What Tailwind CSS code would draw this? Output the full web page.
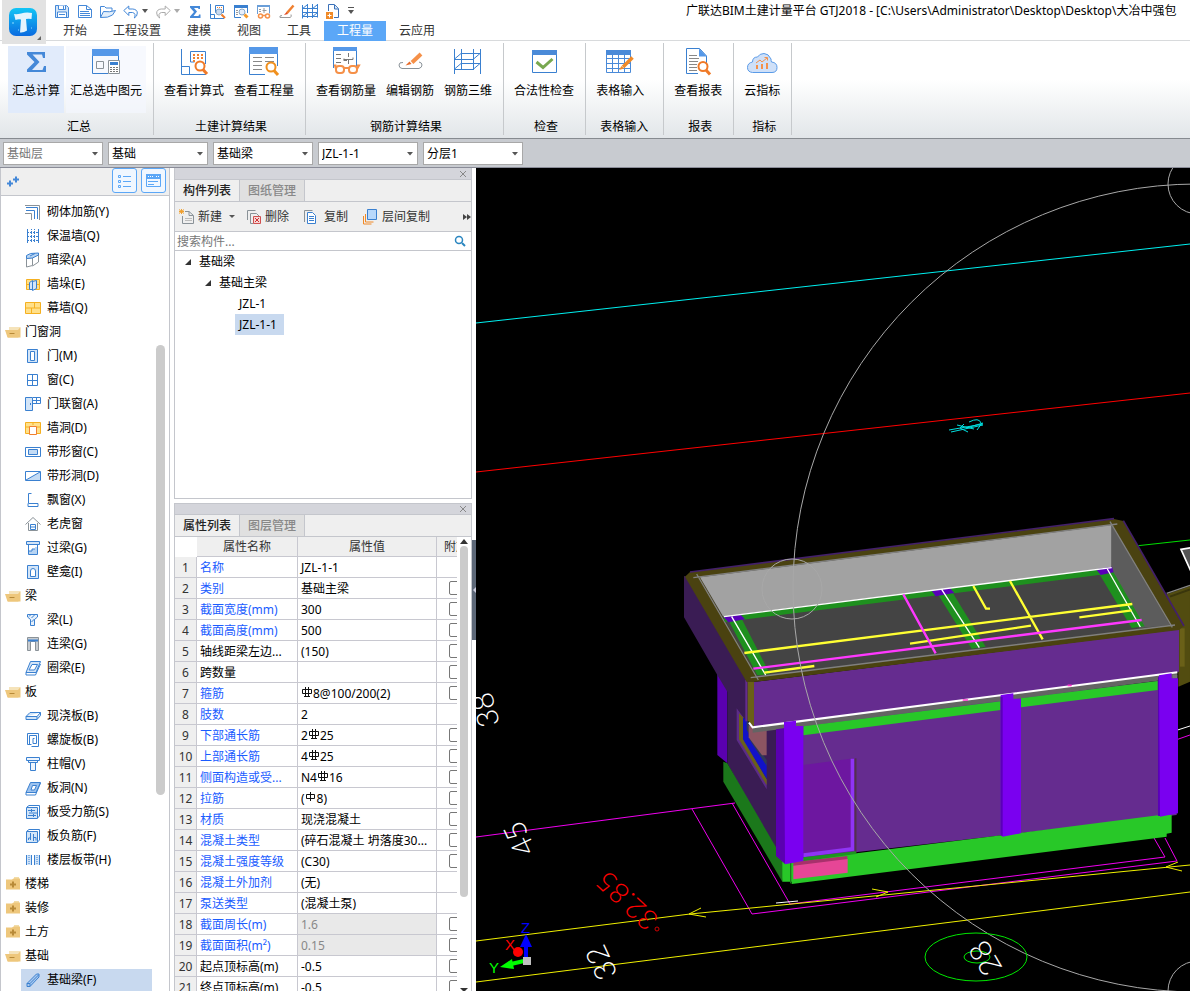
<!DOCTYPE html>
<html lang="zh-CN">
<head>
    <meta charset="UTF-8">
    <meta name="viewport" content="width=device-width, initial-scale=1.0">
    <script src="https://cdn.jsdelivr.net/npm/@tailwindcss/browser@4"></script>
    <title>广联达BIM土建计量平台 GTJ2018</title>
</head>
<body class="h-screen flex flex-col overflow-hidden bg-white text-black text-xs font-['Noto_Sans','Noto_Sans_CJK_SC',sans-serif]">
    <!-- titulo y pestañas -->
    <header class="relative shrink-0">
        <button aria-label="菜单" class="absolute left-[2px] top-0 z-10 w-[44px] h-[44px] bg-[#e2e2e2]">
            <svg class="size-full" viewBox="0 0 44 44">
                <defs>
                    <linearGradient id="logo" x1="0" y1="0" x2="0" y2="1"><stop offset="0" stop-color="#12c5f5"/><stop offset="1" stop-color="#0b6be0"/></linearGradient>
                </defs>
                <rect x="7" y="8" width="28" height="28" rx="7" fill="url(#logo)"/>
                <path d="M12 14q3 .5 7-.5 5-1.500 11-.5l-.5 6q-3-.5-5.500 0l1 11.500q-3.500 2.500-7 2l1-13q-3-.5-5.500.5z" fill="#e4f4fd"/>
                <path d="M10 23h2m17 5h1m-14 2h1" stroke="#8fdcff"/>
                <path d="M39 36v4h-4z" fill="#666"/>
            </svg>
        </button>
        <div class="flex items-center h-[21px] pl-[54px] gap-[7px]">
            <!-- acceso rapido -->
            <button aria-label="保存"><svg class="size-4" viewBox="0 0 16 16" fill="none" stroke="#4488d8"><path d="M1.500 2.500h11l2 2v10h-13z" fill="#d5e6f8"/><path d="M4.500 2.500v4h7v-4M9.500 3v3M3.500 14v-5h9v5M5 11.500h6" fill="#fff"/></svg></button>
            <button aria-label="新建"><svg class="size-4" viewBox="0 0 16 16" fill="none" stroke="#4488d8"><path d="M1.500 2.500h8l5 4v8h-13z"/><path d="M9.500 2.500v4h5M3 8.500h9M3 10.500h10M3 12.500h10"/></svg></button>
            <button aria-label="打开"><svg class="size-4" viewBox="0 0 16 16" fill="none" stroke="#4488d8"><path d="M.5 14.500v-11h4l1.500 1.500h6v3"/><path d="M.5 14.500l3-6q6 1 12-1l-3 4.500q-4 3-12 2.500z" fill="#e3effb"/></svg></button>
            <span class="flex items-center gap-[3px]">
                <button aria-label="撤销"><svg class="size-4" viewBox="0 0 16 16" fill="none" stroke="#4488d8"><path d="M.8 7.500l5-4.500v3h4q4.500.5 4.500 4t-3 5q1-2 .7-3.500t-2.500-2h-3.700v3z"/></svg></button>
                <svg class="w-[6px] h-[4px]" viewBox="0 0 6 4"><path d="M0 0h6L3 4z" fill="#555"/></svg>
            </span>
            <span class="flex items-center gap-[3px]">
                <button aria-label="恢复"><svg class="size-4" viewBox="0 0 16 16" fill="none" stroke="#aaa"><path d="M15.200 7.500l-5-4.500v3h-4q-4.500.5-4.500 4t3 5q-1-2-.7-3.500t2.500-2h3.700v3z"/></svg></button>
                <svg class="w-[6px] h-[4px]" viewBox="0 0 6 4"><path d="M0 0h6L3 4z" fill="#aaa"/></svg>
            </span>
            <button aria-label="汇总计算"><svg class="size-4" viewBox="0 0 16 16"><path d="M3 3h10v3h-1.500l-.5-1H7l3 3.500L6.500 13H11.500l.5-1.500h1.500V15H3v-1.500L7 9 3 4.500z" fill="#4488d8"/></svg></button>
            <button aria-label="查看计算式"><svg class="size-4" viewBox="0 0 16 16" fill="none" stroke="#3a80d0"><path d="M.5 1v14.500H14M.5 11.500h4v4M5.500 2.500h8v7h-8z"/><path d="M7 4.500h5M7 6.500h5" stroke="#f08030" stroke-dasharray="1 1"/><circle cx="9" cy="9" r="3" fill="#c9daf0" stroke="#88a8c8"/><path d="M11.500 11.500l3.500 3.500" stroke="#f07a28" stroke-width="2"/></svg></button>
            <button aria-label="查看工程量"><svg class="size-4" viewBox="0 0 16 16" fill="none" stroke="#3a80d0"><path d="M8 14.500H1.500v-12h13V10"/><path d="M1 3.500h14" stroke-width="3"/><path d="M3 7.500h2M3 9.500h2M3 11.500h2" stroke="#999"/><circle cx="9" cy="9" r="3" fill="#e6eefa" stroke="#88a8c8"/><path d="M11.500 11.500l3 3" stroke="#f59a28" stroke-width="3"/></svg></button>
            <button aria-label="查看钢筋量"><svg class="size-4" viewBox="0 0 16 16" fill="none" stroke="#6a9ed8"><path d="M1.500 11v-8.500h12v8"/><path d="M1 3h13" stroke-width="2"/><path d="M3 6.500h2M3 8.500h2M8 5v5M6.500 7.500h4" stroke="#999"/><g stroke="#f59048" stroke-width="1.500"><circle cx="4.500" cy="13" r="2"/><circle cx="11.500" cy="13" r="2"/><path d="M6.500 12.500h3"/></g></svg></button>
            <button aria-label="编辑钢筋"><svg class="size-4" viewBox="0 0 16 16" fill="none"><path d="M14.500 2.500L8 10" stroke="#f08030" stroke-width="2.500"/><path d="M7.500 9l-2.500 3 4-1z" fill="#e04820"/><path d="M3 12.500q-3 0-2 2h10q2-.5 1-3" stroke="#999"/></svg></button>
            <button aria-label="钢筋三维"><svg class="size-4" viewBox="0 0 16 16" fill="none" stroke="#3a80d0"><path d="M.5 2v13.500M5.500 1v14M10.500 1v14M15.500 1v13.500M0 5.500h16M0 9.500h16M0 13.500h16M0 6l5-4M0 14l5-4M10 6l5-4M10 14l5-4"/></svg></button>
            <button aria-label="导入"><svg class="size-4" viewBox="0 0 16 16" fill="none" stroke="#3a70b8"><path d="M3.500 8v-6.500h6l4 4v9H9"/><path d="M9.500 2v4h4" fill="#d5e6f8"/><rect x="1" y="9" width="7" height="7" fill="#f08a28" stroke="none"/><path d="M4.500 10.500v4M2.500 12.500h4" stroke="#fff"/></svg></button>
            <button aria-label="自定义"><svg class="w-[6px] h-[8px]" viewBox="0 0 6 8"><path d="M0 .5h6" stroke="#555"/><path d="M0 3h6L3 7z" fill="#555"/></svg></button>
            <p class="flex-1 min-w-0 ml-[325px] overflow-hidden whitespace-nowrap leading-5">广联达BIM土建计量平台 GTJ2018 - [C:\Users\Administrator\Desktop\Desktop\大冶中强包</p>
        </div>
        <nav class="flex h-[20px] pl-[50px] leading-5 text-[#333] border-b border-[#d8dadc]">
            <a href="#" class="px-[13px]">开始</a>
            <a href="#" class="px-[13px]">工程设置</a>
            <a href="#" class="px-[13px]">建模</a>
            <a href="#" class="px-[13px]">视图</a>
            <a href="#" class="px-[13px]">工具</a>
            <a href="#" class="px-[13px] h-[20px] bg-[#5ba7f7] text-white">工程量</a>
            <a href="#" class="px-[13px]">云应用</a>
        </nav>
    </header>

    <!-- cinta -->
    <section class="shrink-0 flex h-[98px] pl-1 pt-[2px] pb-[3px] bg-linear-to-b from-white from-40% to-[#e2e6e9] border-b border-[#868b90]">
        <div class="flex flex-col pl-1 pr-[7px] border-r border-[#c6c9cc]">
            <div class="flex gap-[2px] pt-[3px]">
                <button class="h-[67px] px-1 flex flex-col items-center bg-[#e1ebfb]">
                    <svg class="size-8" viewBox="0 0 32 32"><path d="M7 6h18v6h-2l-1-3.500H12.500l7 7.500-7.500 8h10.500l1.500-4h2V26H7v-2.500l7.500-7.500L7 8.500z" fill="#4488d8"/></svg>
                    <span class="leading-[26px]">汇总计算</span>
                </button>
                <button class="h-[67px] px-1 flex flex-col items-center bg-[#f3f7fe]/70">
                    <svg class="size-8" viewBox="0 0 32 32" fill="none"><path d="M18 27.500H2.500V4.500h26V14" stroke="#3a80d0"/><path d="M2 3h27v7H2z" fill="#5598e8"/><path d="M6.500 15.500h7v7h-7z" stroke="#8a9298"/><path d="M18.500 14.500h11v13h-11z" fill="#fff" stroke="#8a9298"/><path d="M20 17.500h8" stroke="#3a80d0" stroke-width="3"/><path d="M20 21.500h9M20 23.500h9M20 25.500h9" stroke="#777" stroke-dasharray="2 1"/></svg>
                    <span class="leading-[26px]">汇总选中图元</span>
                </button>
            </div>
            <span class="mt-auto pl-1 text-center leading-4">汇总</span>
        </div>
        <div class="flex flex-col pl-1.5 pr-[7px] border-r border-[#c6c9cc]">
            <div class="flex gap-[2px] pt-[3px]">
                <button class="h-[67px] px-1 flex flex-col items-center">
                    <svg class="size-8" viewBox="0 0 32 32" fill="none" stroke="#3a80d0"><path d="M3.500 3v25.500H28M3.500 20.500h8v8M12.500 16V5.500h15V18M12.500 16h4"/><path d="M15 9h11M15 12h11M15 15h4" stroke="#f08030" stroke-width="2" stroke-dasharray="2 2"/><circle cx="22" cy="20" r="4.500" fill="#fff" stroke="#f07a28" stroke-width="2"/><path d="M25 23.500l4 4.500" stroke="#f07a28" stroke-width="3"/></svg>
                    <span class="leading-[26px]">查看计算式</span>
                </button>
                <button class="h-[67px] px-1 flex flex-col items-center">
                    <svg class="size-8" viewBox="0 0 32 32" fill="none"><path d="M17 28.500H1.500V4.500h28V20" stroke="#3a80d0"/><path d="M1 1h29v7H1z" fill="#5598e8"/><path d="M5 11.500h9M5 15.500h9M5 19.500h9M5 23.500h9M17 11.500h9M17 15.500h9" stroke="#888"/><circle cx="23" cy="21" r="4.500" fill="#fff" stroke="#f0901e" stroke-width="2"/><path d="M26 24.500l4 4.500" stroke="#f0901e" stroke-width="3"/></svg>
                    <span class="leading-[26px]">查看工程量</span>
                </button>
            </div>
            <span class="mt-auto pl-1 text-center leading-4">土建计算结果</span>
        </div>
        <div class="flex flex-col pl-1.5 pr-[7px] border-r border-[#c6c9cc]">
            <div class="flex gap-[2px] pt-[3px]">
                <button class="h-[67px] px-1 flex flex-col items-center">
                    <svg class="size-8" viewBox="0 0 32 32" fill="none"><path d="M3.500 22V3.500h23V20" stroke="#3a80d0"/><path d="M3 1h24v4H3z" fill="#5598e8"/><path d="M6 8.500h5M6 12.500h5M6 16.500h5M18.500 7v4M18.500 14v4M14 14.500v-1h9v-2M14 12.500v2h3" stroke="#777"/><g stroke="#f59048" stroke-width="2"><rect x="6" y="20" width="8" height="7" rx="3"/><rect x="19" y="20" width="8" height="7" rx="3"/><path d="M14 22h5M6 23l-1-3.500h1.500M27 23l2-3.500h-2"/></g></svg>
                    <span class="leading-[26px]">查看钢筋量</span>
                </button>
                <button class="h-[67px] px-1 flex flex-col items-center">
                    <svg class="size-8" viewBox="0 0 32 32" fill="none"><path d="M27 8l-9 8.500" stroke="#f59048" stroke-width="4"/><path d="M15.500 15.500l-4 4 6-1.500z" fill="#e86a28"/><path d="M9 16.500q-4-.5-4 2.500t3 3.500h17q3-1 3-3.500t-3-3" stroke="#8a9298"/></svg>
                    <span class="leading-[26px]">编辑钢筋</span>
                </button>
                <button class="h-[67px] px-1 flex flex-col items-center">
                    <svg class="size-8" viewBox="0 0 32 32" fill="none" stroke="#3a80d0"><path d="M2.500 3v25M9.500 3v20M21.500 3v20M28.500 3v25M9 7.500h19.500M2 13.500h20M9 17.500h19.500M2 23.500h20M2 13.500l7-6M2 23.500l7-6M21 13.500l7-6M21 23.500l7-6"/></svg>
                    <span class="leading-[26px]">钢筋三维</span>
                </button>
            </div>
            <span class="mt-auto pl-1 text-center leading-4">钢筋计算结果</span>
        </div>
        <div class="flex flex-col pl-1.5 pr-[7px] border-r border-[#c6c9cc]">
            <button class="h-[67px] mt-[3px] px-1 flex flex-col items-center">
                <svg class="size-8" viewBox="0 0 32 32" fill="none"><path d="M4.500 5v21.500h24V5" fill="#fff" stroke="#3a80d0"/><path d="M4 4h25v5H4z" fill="#4a8ad8"/><path d="M8.500 16l6.500 5.500 9.500-8.500" stroke="#78a850" stroke-width="3"/></svg>
                <span class="leading-[26px]">合法性检查</span>
            </button>
            <span class="mt-auto pl-1 text-center leading-4">检查</span>
        </div>
        <div class="flex flex-col pl-1.5 pr-[15px] border-r border-[#c6c9cc]">
            <button class="h-[67px] mt-[3px] px-1 flex flex-col items-center">
                <svg class="size-8" viewBox="0 0 32 32" fill="none"><path d="M2.500 8v18.500h24V8M2 12.500h24M2 17.500h24M2 22.500h24M8.500 8v18M14.500 8v18M20.500 8v18" stroke="#4a8ad8"/><path d="M2 4h25v5H2z" fill="#4a8ad8"/><path d="M28.500 11.500L19 21" stroke="#f08a28" stroke-width="3.500"/><path d="M17.500 20l-2.500 4 5-1.500z" fill="#f08a28"/></svg>
                <span class="leading-[26px]">表格输入</span>
            </button>
            <span class="mt-auto pl-2 text-center leading-4">表格输入</span>
        </div>
        <div class="flex flex-col pl-1.5 pr-[7px] border-r border-[#c6c9cc]">
            <button class="h-[67px] mt-[3px] px-1 flex flex-col items-center">
                <svg class="size-8" viewBox="0 0 32 32" fill="none"><path d="M16 27.500H4.500v-25h13l7 7.500v7" fill="#fff" stroke="#3a80d0"/><path d="M17 2.500l8 8h-8z" fill="#5598e8"/><path d="M7 9.500h8M7 12.500h10M7 15.500h9M7 18.500h8M7 21.500h8M7 24.500h8" stroke="#888"/><circle cx="21" cy="20.500" r="4.500" fill="#fff" stroke="#f07a28" stroke-width="2"/><path d="M24 24l4 4.500" stroke="#f07a28" stroke-width="3"/></svg>
                <span class="leading-[26px]">查看报表</span>
            </button>
            <span class="mt-auto pl-1 text-center leading-4">报表</span>
        </div>
        <div class="flex flex-col pl-1.5 pr-[7px] border-r border-[#c6c9cc]">
            <button class="h-[67px] mt-[3px] px-1 flex flex-col items-center">
                <svg class="size-8" viewBox="0 0 32 32" fill="none"><path d="M6.500 26.500q-5-.5-5-5t5-5.500q0-5 5-5 2-3.500 6.500-3.500t7 5.500q0 2 .5 3 5.500.5 5.500 5.500t-5 5z" fill="#cfe0f8" stroke="#5a9be8"/><path d="M11 23v-4M16 23v-5M21 23v-6" stroke="#f59048" stroke-width="2"/><path d="M10 17l4-3 2 2 5-4M18.500 11.500h3v3" stroke="#f59048"/></svg>
                <span class="leading-[26px]">云指标</span>
            </button>
            <span class="mt-auto pl-1 text-center leading-4">指标</span>
        </div>
    </section>

    <!-- selectores -->
    <section id="filters" class="shrink-0 flex gap-[5px] h-[29px] pl-[3px] pt-[3px] bg-[#c8cbd0] border-b border-[#8a8c98]"></section>

    <main class="flex-1 min-h-0 flex">
        <!-- navegacion -->
        <aside class="relative shrink-0 w-[170px] flex flex-col border-x border-[#c4c6cc]">
            <div class="flex items-center gap-1 shrink-0 h-[28px] pl-[6px] pr-[3px] bg-[#efefef] border-b border-[#c4c6cc]">
                <svg class="w-3 h-3 mr-auto" viewBox="0 0 12 12"><path d="M0 7.500h6M3 4.500v6M6 3.500h6M9 .5v6" stroke="#4488d8" stroke-width="2"/></svg>
                <button aria-label="列表" class="size-[25px] -mt-[2px] rounded-[3px] border border-[#5ba7f7] bg-[#f0f7ff] flex items-center justify-center"><svg class="size-4" viewBox="0 0 16 16" fill="none" stroke="#5ba7f7"><path d="M1.500 2.500h2v2h-2zM1.500 7.500h2v2h-2zM1.500 12.500h2v2h-2zM6 3.500h8M6 8.500h8M6 13.500h8"/></svg></button>
                <button aria-label="面板" class="size-[25px] -mt-[2px] rounded-[3px] border border-[#5ba7f7] bg-[#f0f7ff] flex items-center justify-center"><svg class="size-4" viewBox="0 0 16 16" fill="none" stroke="#5ba7f7"><path d="M.5 1.500h14v12H.5z"/><path d="M0 3.500h15" stroke-width="5"/><path d="M2 3.500h5M10 3.500h3" stroke="#fff" stroke-dasharray="1 1"/><path d="M2 8.500h10M2 11.500h6"/></svg></button>
            </div>
            <ul id="nav-tree" class="flex-1 min-h-0 overflow-hidden pt-1"></ul>
            <div class="absolute right-[4px] top-[177px] w-[9px] h-[450px] rounded-full bg-[#cbcbcb]"></div>
        </aside>

        <div class="shrink-0 w-[302px] pl-1 pr-0 flex flex-col">
            <!-- lista de componentes -->
            <section class="shrink-0 h-[331px] flex flex-col border-x border-b border-[#c4c6cc]">
                <div class="flex justify-end items-center h-[12px] pr-1 bg-[#d4d5db] border-b border-[#c4c6cc]"><button aria-label="关闭"><svg class="size-2" viewBox="0 0 8 8"><path d="M1 1l6 6M7 1l-6 6" stroke="#888"/></svg></button></div>
                <div class="flex h-[22px] leading-[21px] bg-[#efefef] border-b border-[#c4c6cc]">
                    <button class="w-[65px] font-medium text-[#222] border-r border-[#c4c6cc]">构件列表</button>
                    <button class="w-[65px] font-medium text-[#888] bg-[#e0e0e0] border-r border-[#c4c6cc]">图纸管理</button>
                </div>
                <div class="flex items-center h-[30px] pl-1 bg-[#efefef] border-b border-[#c4c6cc] text-[#333]">
                    <button class="flex items-center gap-[3px]"><svg class="size-4" viewBox="0 0 16 16" fill="none"><path d="M6 2.500h4l4.500 4v8h-11V7" stroke="#8a9298"/><path d="M10 2.500v4h4" stroke="#8a9298"/><path d="M6 9.500h7M6 11.500h7" stroke="#bbb"/><path d="M0 .5l5 4M5 .5l-5 4M0 2.500h5M2.500 0v5" stroke="#f0a030"/></svg>新建</button>
                    <svg class="ml-[7px] w-[6px] h-[4px]" viewBox="0 0 6 4"><path d="M0 0h6L3 3z" fill="#555"/></svg>
                    <button class="ml-[11px] flex items-center gap-[3px]"><svg class="size-4" viewBox="0 0 16 16" fill="none"><path d="M1.500 11V1.500h8M4.500 14.500v-10h6l3 3M4.500 14.500h3" stroke="#8a9298"/><path d="M7.500 7.500h7v7h-7z" fill="#f6d5d5" stroke="#d05050"/><path d="M9 9l4 4M13 9l-4 4" stroke="#d03030"/></svg>删除</button>
                    <button class="ml-[14px] flex items-center gap-[5px]"><svg class="size-4" viewBox="0 0 16 16" fill="none"><path d="M1.500 13V1.500h8" stroke="#8a9298"/><path d="M4.500 3.500h5l3 3v8h-8z" fill="#fff" stroke="#3a80d0"/><path d="M6 7.500h5M6 9.500h5M6 11.500h5" stroke="#3a80d0"/></svg>复制</button>
                    <button class="ml-[14px] flex items-center gap-[4px]"><svg class="size-4" viewBox="0 0 16 16" fill="none"><path d="M5.500.5h9v10h-9z" fill="#b8d8fb" stroke="#3a80d0"/><path d="M3.500 5v8h8M1.500 7v8h8" stroke="#f08a28"/></svg>层间复制</button>
                    <button aria-label="更多" class="ml-auto"><svg class="w-2 h-[6px]" viewBox="0 0 8 6"><path d="M0 0l4 3-4 3zM4 0l4 3-4 3z" fill="#444"/></svg></button>
                </div>
                <div class="flex items-center h-[19px] pl-[2px] pr-[5px] border-b border-[#c4c6cc]">
                    <input aria-label="搜索构件" type="text" placeholder="搜索构件..." class="flex-1 min-w-0 pt-px outline-none leading-[18px] placeholder:text-[#777]">
                    <svg class="size-3" viewBox="0 0 12 12" fill="none" stroke="#2a86c0"><circle cx="5" cy="5" r="3.500" stroke-width="1.500"/><path d="M8 8l3 3" stroke-width="2"/></svg>
                </div>
                <ul class="leading-[21px]">
                    <li class="flex items-center gap-2 pl-[10px]"><svg class="size-[6px]" viewBox="0 0 6 6"><path d="M6 0v6H0z" fill="#333"/></svg>基础梁</li>
                    <li class="flex items-center gap-2 pl-[30px]"><svg class="size-[6px]" viewBox="0 0 6 6"><path d="M6 0v6H0z" fill="#333"/></svg>基础主梁</li>
                    <li class="pl-[64px]">JZL-1</li>
                    <li class="pl-[60px]"><span class="inline-block h-[21px] pl-1 pr-[7px] bg-[#c8d9ef]">JZL-1-1</span></li>
                </ul>
            </section>

            <!-- lista de propiedades -->
            <section class="mt-1 flex-1 min-h-0 flex flex-col border-x border-t border-[#c4c6cc]">
                <div class="shrink-0 flex justify-end items-center h-[11px] pr-1 bg-[#d4d5db] border-b border-[#c4c6cc]"><button aria-label="关闭"><svg class="size-2" viewBox="0 0 8 8"><path d="M1 1l6 6M7 1l-6 6" stroke="#888"/></svg></button></div>
                <div class="shrink-0 flex h-[22px] leading-[21px] bg-[#efefef] border-b border-[#c4c6cc]">
                    <button class="w-[65px] font-medium text-[#222] border-r border-[#c4c6cc]">属性列表</button>
                    <button class="w-[65px] font-medium text-[#888] bg-[#e0e0e0] border-r border-[#c4c6cc]">图层管理</button>
                </div>
                <div class="flex-1 min-h-0 flex">
                    <div class="w-[282px] shrink-0 overflow-hidden">
                        <table class="w-[300px] table-fixed border-separate border-spacing-0 leading-[18px] whitespace-nowrap">
                            <thead>
                                <tr class="h-[20px] bg-[#efefef] text-[#333]">
                                    <th class="w-[22px] bg-white"></th>
                                    <th class="w-[101px] p-0 pt-px font-normal border-r border-b border-[#c8c8d0]">属性名称</th>
                                    <th class="w-[139px] p-0 pt-px font-normal border-r border-b border-[#c8c8d0]">属性值</th>
                                    <th class="w-[38px] p-0 pt-px font-normal border-b border-[#c8c8d0]">附加</th>
                                </tr>
                            </thead>
                            <tbody id="props"></tbody>
                        </table>
                    </div>
                    <div class="flex-1 flex flex-col items-center pt-[2px]">
                        <svg class="w-2 h-[5px]" viewBox="0 0 8 5"><path d="M0 5h8L4 0z" fill="#333"/></svg>
                        <div class="mt-[2px] w-2 h-[351px] rounded-full bg-[#cbcbcb]"></div>
                        <svg class="mt-auto w-2 h-[3px]" viewBox="0 0 8 3"><path d="M0 0h8L4 4z" fill="#333"/></svg>
                    </div>
                </div>
            </section>
        </div>

        <div class="shrink-0 w-1">
            <button aria-label="折叠" class="block mt-[372px] w-1 h-[100px] bg-[#5d6878]"><svg class="w-1 h-[6px]" viewBox="0 0 4 6"><path d="M4 0v6L1 3z" fill="#ccd"/></svg></button>
        </div>

        <!-- vista 3D -->
        <div class="flex-1 min-w-0 bg-black overflow-hidden">
            <svg class="w-full h-full" viewBox="476 168 714 823" preserveAspectRatio="xMinYMin slice" fill="none">
                <path d="M476 323L1190 244" stroke="#00f0f0"/>
                <path d="M476 472L1190 393" stroke="#ff0000"/>
                <g stroke="#00e0e0">
                    <path d="M949 430l34-6M951 432l32-7M957 425l17 4M960 428l8 4M966 428l17-5M969 422q10-5 12 1M977 430l5-7M964 424l-4 4"/>
                </g>
                <g stroke="#f000f0">
                    <path d="M476 837L735 803"/>
                    <path d="M692 809L752 914 1177 861 1165 838M732 803L790 904 1165 857 1154 838"/>
                </g>
                <g stroke="#f0f000">
                    <path d="M476 941L690 914 1190 865M476 982L1190 892"/>
                    <path d="M701 908l-12 6 17 3M872 889l16 3-12 5M1178 862l-12 5 16 4"/>
                </g>
                <path d="M776 903l22-2" stroke="#fff"/>

                <!-- edificio -->
                <g transform="translate(670 500) scale(.33333)">
                    <path d="M1405 137L1560 120" stroke="#00e000" stroke-width="3"/>
                    <path d="M1533 148L1570 142V230z" fill="#555" stroke="#fff" stroke-width="5"/>
                    <path d="M1490 283L1560 258V545L1525 560V385z" fill="#524c10"/>
                    <path d="M1490 280L1560 256" stroke="#888" stroke-width="4"/>
                    <path d="M1500 290L1560 268" stroke="#3a360c" stroke-width="6"/>
                    <path d="M1523 690L1560 678" stroke="#fff" stroke-width="3"/>
                    <path d="M1523 718L1560 705" stroke="#e800e8" stroke-width="3"/>
                    <path d="M142 520L172 560V790L142 765z" fill="#5a00b0"/>
                    <path d="M42 228L60 232 232 543V665L345 690V1092L318 1060 172 790V575L142 525 42 352z" fill="#3a1c54"/>
                    <path d="M160 785L172 790 318 1042 345 1092 337 1145 160 845z" fill="#1b781b"/>
                    <!-- ventana lateral -->
                    <path d="M200 625L222 655V718L290 840V868L200 720z" fill="#5c2c88"/>
                    <path d="M207 640L222 655V722L290 838V856L207 718z" fill="#6a6018"/>
                    <path d="M219 652L236 668V710L290 790V836L219 718z" fill="#1212c8"/>
                    <path d="M230 662L238 668V718L290 798V780L230 690z" fill="#303858"/>
                    <path d="M236 676L290 690V766H276L236 712z" fill="#8c5562"/>
                    <!-- fachada -->
                    <path d="M345 690L400 670 1465 543H1520V945L400 1075z" fill="#652c8f"/>
                    <path d="M250 546L1527 388V515L250 682z" fill="#652c8f"/>
                    <path d="M226 540H233V664H226z" fill="#652c8f"/>
                    <path d="M233 543H252V680L233 662z" fill="#6a6018"/>
                    <path d="M1530 385H1544V500H1530z" fill="#6a6018"/>
                    <path d="M248 682L1522 517V535L380 682 248 698z" fill="#646464"/>
                    <path d="M1508 524h14v12h-14z" fill="#777"/>
                    <path d="M400 679L992 604V630L400 706zM1053 595L1463 543V570L1053 622z" fill="#28c828"/>
                    <path d="M237 668L248 682 1522 517" stroke="#fff" stroke-width="6"/>
                    <path d="M878 600h16M1193 556h12" stroke="#f3c" stroke-width="5"/>
                    <!-- puerta -->
                    <path d="M400 795L552 775V1052L400 1072z" fill="#6d17a0"/>
                    <path d="M542 776h10V1052L400 1072V1060L542 1042z" fill="#9034f4"/>
                    <path d="M557 775V1060" stroke="#54304c" stroke-width="5"/>
                    <!-- zocalo -->
                    <path d="M337 1080L560 1060 1000 1005 1470 945H1505V998L1490 1001V1010L365 1152V1145H337z" fill="#28c828"/>
                    <path d="M400 1072L558 1054V1062L400 1084z" fill="#1e9420"/>
                    <path d="M362 1085V1150" stroke="#1a7a1a" stroke-width="4"/>
                    <path d="M370 1086L532 1068V1080L370 1098z" fill="#a8306c"/>
                    <path d="M370 1097L533 1077V1118L370 1138z" fill="#e64696"/>
                    <!-- columnas -->
                    <path d="M318 688L345 684V1092L318 1068z" fill="#5a00b0"/>
                    <path d="M342 666L378 662V678H400V1083L345 1093z" fill="#7a00f0"/>
                    <path d="M992 585L1030 580V596H1053V1000L998 1010 992 1005z" fill="#7a00f0"/>
                    <path d="M995 590V1007M1467 530V948" stroke="#5a00b8" stroke-width="6"/>
                    <path d="M1467 526L1505 520V535H1524V940L1470 950z" fill="#7a00f0"/>
                    <!-- antepecho -->
                    <path d="M45 230L60 216 1332 57 1360 63 1541 378 1527 390 250 546H230z" fill="#4a4210"/>
                    <path d="M60 216L1332 56M1360 62L1542 378" stroke="#43206a" stroke-width="5"/>
                    <path d="M90 232L1325 75 1500 375 262 530z" fill="#444"/>
                    <path d="M90 232L1325 75V203L160 350z" fill="#a2a2a2"/>
                    <path d="M1324 75L1500 375 1410 384 1310 203H1324z" fill="#5c5c5c"/>
                    <path d="M70 233L1342 72M80 222L265 540M242 533L1515 375M1320 65L1507 382" stroke="#808080" stroke-width="4"/>
                    <!-- vigas -->
                    <path d="M160 350L1310 205V222L165 366zM175 360L215 356 300 522 262 526zM805 285L848 278 947 440 905 446zM1288 222L1330 215 1424 379 1385 384z" fill="#1e901e"/>
                    <path d="M160 350L212 344 225 358 175 367zM785 272L840 265 853 279 797 289zM1278 208L1326 200 1331 217 1292 225z" fill="#5a00b8"/>
                    <path d="M162 350L1325 203M185 350L287 525M815 268L928 443M1312 207L1411 381" stroke="#fff" stroke-width="4"/>
                    <path d="M223 459L1387 312M720 431L1083 377M1228 352L1385 331M910 258L948 326H960M1020 243L1118 418M283 518L433 498" stroke="#ff3" stroke-width="7"/>
                    <path d="M250 506L1415 360M700 283L797 460" stroke="#ff38ff" stroke-width="7"/>
                </g>

                <!-- orbita -->
                <g stroke="#a8a8a8">
                    <circle cx="1197" cy="588" r="404"/>
                    <circle cx="792" cy="589" r="30"/>
                    <circle cx="1198" cy="184" r="30"/>
                    <circle cx="1198" cy="991" r="30"/>
                </g>

                <!-- cotas -->
                <ellipse cx="976" cy="957" rx="51" ry="24" stroke="#00e800"/>
                <ellipse cx="977" cy="957" rx="13" ry="6" stroke="#00e800"/>
                <g fill="#fff" class="font-['Lato',sans-serif] font-light text-[30px]">
                    <text transform="translate(500 724) rotate(-105)">38</text>
                    <text transform="translate(536 850) rotate(-115)">45</text>
                    <text transform="translate(618 974) rotate(-115)">32</text>
                    <text transform="translate(1003 968) rotate(-120)">28</text>
                </g>
                <text transform="translate(660 918) rotate(-137)" fill="#ff0000" class="font-['Lato',sans-serif] font-light text-[28px]">32.85</text>
                <circle cx="657" cy="929" r="2" stroke="#d00000"/>

                <!-- ejes -->
                <path d="M526 958V944" stroke="#00f" stroke-width="4"/>
                <path d="M526 934L532 947H520z" fill="#00f"/>
                <circle cx="518" cy="952" r="5" fill="#f00"/>
                <path d="M524 961L511 964" stroke="#0f0" stroke-width="4"/>
                <path d="M500 967L512 959 514 969z" fill="#0f0"/>
                <path d="M523 957h8v8h-8z" fill="#c0c0c0"/>
                <g class="font-['Liberation_Sans',sans-serif] text-[15px]">
                    <text x="521" y="933" fill="#00f">Z</text>
                    <text x="505" y="950" fill="#f00">X</text>
                    <text x="489" y="973" fill="#0f0">Y</text>
                </g>
            </svg>
        </div>
    </main>

    <script>
        const filters = [['楼层', '基础层'], ['类型', '基础'], ['构件类型', '基础梁'], ['构件', 'JZL-1-1'], ['分层', '分层1']];
        document.getElementById('filters').innerHTML = filters.map(([name, value], i) => `
            <label class="relative w-[100px] h-[23px]">
                <select aria-label="${name}" class="appearance-none block w-full h-full pl-[3px] leading-[21px] bg-white border border-[#a8a8a8] rounded-none outline-none ${i === 0 ? 'text-[#777]' : 'text-black'}"><option>${value}</option></select>
                <svg class="absolute right-[5px] top-[10px] w-[6px] h-[4px]" viewBox="0 0 6 4"><path d="M0 0h6L3 3.500z" fill="#555"/></svg>
            </label>`).join('');

        // iconos del arbol, 16x16
        const icons = {
            masonry: '<path d="M0 1.500h14.500V16M0 9.500h6.500V16" stroke="#8a9298"/><path d="M1 3.500h11.500V15M1 6.500h8.500V15"/>',
            insulation: '<path d="M2.500 1v14M13.500 1v14"/><path d="M6.500 1v14M9.500 1v14" stroke-dasharray="1 1"/><path d="M2 4.500h12M2 8.500h12M2 12.500h12" stroke-dasharray="2 1"/>',
            hidden: '<path d="M1.500 6.500l6-1v8l-6 1.500zM7.500 5.500l6-3.500v8l-6 4" stroke="#8a9298"/><path d="M1.500 6.500v-3l4-2 8-.5v2l-6 3z" fill="#b8d4f2"/><path d="M5 4l5-2.500"/>',
            pier: '<path d="M1.500 3.500h13v10h-13zM1 8.500h14" fill="#ffe08a" stroke="#f5b020"/><path d="M4.500 6.500l3-2v9h-3zM7.500 5.500l4-1v8l-4 2z" fill="#d3e5f8"/>',
            curtain: '<path d="M.5 2.500h15v11H.5zM.5 8h15M9.500 2.500V8M6.500 8v5.500" fill="#ffe08a" stroke="#f5b020"/>',
            door: '<path d="M2.500 1.500h10v13h-10z" fill="#d3e5f8"/><path d="M5.500 3.500h4v9h-4z" fill="#fff"/>',
            window: '<path d="M2.500 2.500h10v11h-10zM7.500 2.500v11M2.500 8.500h10"/>',
            doorwin: '<path d="M.5 1.500h7v13h-7z" fill="#d3e5f8"/><path d="M8 1.500h7.500v6H8M11.500 1.500v6M8 4.500h7.500M5.500 7v2"/>',
            hole: '<path d="M.5 2.500h15v11H.5zM.5 7h15M8 2.500V5" fill="#ffe08a" stroke="#f5b020"/><path d="M4.500 6.500h7v8h-7z" fill="#fff" stroke="#f08030"/>',
            strip: '<path d="M.5 3.500h15v9H.5z" fill="#fff"/><path d="M3.500 5.500h9v5h-9z" fill="#c3dbf5"/>',
            striphole: '<path d="M.5 3.500h15v9H.5z" fill="#fff"/><path d="M1 12l14-8v8z" fill="#c3dbf5" stroke="none"/><path d="M1 12l14-8"/>',
            bay: '<path d="M6.500 1.500h-3v10h9.500v3h-10v-3"/>',
            dormer: '<path d="M.5 8.500L8 1.500l7.500 7M3.500 7v7.500h9V7" stroke="#8a9298"/><path d="M5.500 8.500h5v5h-5zM5.500 11h5"/>',
            lintel: '<path d="M1.500 1.500h13v3h-13z" fill="#d3e5f8"/><path d="M3.500 4.500v10h9v-10"/><path d="M4 11h3V9h3V7h2v7H4z" fill="#b8d4f2" stroke="none"/><path d="M4 11h3V9h3"/>',
            niche: '<path d="M2.500 1.500h11v13h-11z" fill="#d3e5f8"/><path d="M5.500 12.500V7q0-2.500 2.500-2.500T10.500 7v5.500z" fill="#fff"/>',
            beam: '<path d="M2.500 2.500h10v2.500l-3 2.500v6h-4v-6l-3-2.500z" fill="#e6f0fb"/><path d="M4 4.500l2-2M6.500 6l3-3M6.500 10l3-3"/>',
            link: '<path d="M2.500 1.500h11v13h-3v-9h-5v9h-3z" fill="#c8ccd0" stroke="#8a9298"/><path d="M3 4.500h10" stroke-width="2"/>',
            ring: '<path d="M5.500 1.500h10l-4.500 11H1z" fill="#d3e5f8"/><path d="M7 4.500h5.500L9.500 10H4z" fill="#fff"/><path d="M1 12.500V15h9.500l5-11"/>',
            slab: '<path d="M1 8.500l4-4h10.500l-3.500 4zM1 8.500v3h11l3.500-4v-3" fill="#d3e5f8"/><path d="M12 8.500v3"/>',
            spiral: '<path d="M6.500 12.500h-4v-11h11v13h-7M4.500 12.500v-9h7v8h-3.500v-5H9.500"/>',
            cap: '<path d="M1.500 1.500h13v3h-13zM5.500 6v8.500h5V6M3.500 4.500v2h9v-2" fill="#eef5fd"/>',
            slabhole: '<path d="M5.500 2.500h10L11 12.500H1z" fill="#9cc2ee"/><path d="M7.500 5.500h4l-2 4.500H6z" fill="#fff"/><path d="M1 12.500V15h9.500l5-12"/>',
            slabbar: '<path d="M1.500 3.500h11v11h-11z" fill="#d3e5f8"/><path d="M2 3l2-1.500h10.500V12l-2 2M3 6.500h7M3 11.500h8M6.500 5v3M8.500 10v3M4 9h8"/>',
            negbar: '<path d="M1.500 3.500h11v11h-11z" fill="#d3e5f8"/><path d="M2 3l2-1.500h10.500V12l-2 2M5.500 5v7M8.500 6v7M3.500 10h2.500M3.500 12v-2M8 9.500h3v3"/>',
            band: '<path d="M1 3h14v10H1z" fill="#d3e5f8" stroke="none"/><path d="M6.500 3h3v10h-3z" fill="#fff" stroke="none"/><path d="M1.500 3v10M6.500 3v10M9.500 3v10M14.500 3v10"/><path d="M4 3v10M12 3v10" stroke-dasharray="1 1"/>',
            foundation: '<path d="M2 11.500L11.500 2h2.500v3L5 14.500H2z" fill="#a8c8ee"/><path d="M2 11.500h3v3M5 11.500L13.500 3"/>',
            open: '<path d="M4 3h11v10H4z" fill="#f5e3ba" stroke="none"/><path d="M1 6h12l2.500-3V13.500H3z" fill="#eec77c" stroke="none"/><path d="M0 6h12l1.500 7.500H2.500z" fill="#eec77c" stroke="none"/><path d="M4.500 9.500h5" stroke="#b88a38"/>',
            closed: '<path d="M9 1h5v2H9z" fill="#f2dca8" stroke="none"/><path d="M1 3.500h6l1.500-1H15v11H1z" fill="#eec77c" stroke="none"/><path d="M8 5.500v6M5 8.500h6" stroke="#b88a38" stroke-width="2"/>'
        };
        const tree = [
            ['masonry', '砌体加筋(Y)'], ['insulation', '保温墙(Q)'], ['hidden', '暗梁(A)'], ['pier', '墙垛(E)'], ['curtain', '幕墙(Q)'],
            ['open', '门窗洞'],
            ['door', '门(M)'], ['window', '窗(C)'], ['doorwin', '门联窗(A)'], ['hole', '墙洞(D)'], ['strip', '带形窗(C)'],
            ['striphole', '带形洞(D)'], ['bay', '飘窗(X)'], ['dormer', '老虎窗'], ['lintel', '过梁(G)'], ['niche', '壁龛(I)'],
            ['open', '梁'],
            ['beam', '梁(L)'], ['link', '连梁(G)'], ['ring', '圈梁(E)'],
            ['open', '板'],
            ['slab', '现浇板(B)'], ['spiral', '螺旋板(B)'], ['cap', '柱帽(V)'], ['slabhole', '板洞(N)'], ['slabbar', '板受力筋(S)'],
            ['negbar', '板负筋(F)'], ['band', '楼层板带(H)'],
            ['closed', '楼梯'], ['closed', '装修'], ['closed', '土方'],
            ['open', '基础'],
            ['foundation', '基础梁(F)']
        ];
        document.getElementById('nav-tree').innerHTML = tree.map(([icon, text]) => {
            const folder = icon === 'open' || icon === 'closed';
            return `<li class="h-[24px] pr-[17px] flex items-center ${folder ? 'pl-0' : 'pl-[20px]'}">
                <a href="#" class="flex-1 flex items-center h-[22px] pl-[4px] ${folder ? 'gap-1' : 'gap-[6px]'} ${icon === 'foundation' ? 'bg-[#c8d9ef]' : ''}">
                    <svg class="size-4" viewBox="0 0 16 16" fill="none" stroke="#3a80d0">${icons[icon]}</svg>${text}
                </a>
            </li>`;
        }).join('');

        // simbolos de acero
        const hrb = '<svg role="img" aria-label="HRB" class="inline w-[12px] h-[14px] -mt-[6px]" viewBox="0 0 12 14" fill="none" stroke="#111"><path d="M1.500 4.500h9v4h-9zM4.500 2v9M7.500 2v9M3 11.500h6"/></svg>';
        const hpb = '<svg role="img" aria-label="HPB" class="inline w-[12px] h-[14px] -mt-[6px]" viewBox="0 0 12 14" fill="none" stroke="#111"><path d="M1.500 4.500h8v4h-8zM5.500 2v9"/></svg>';
        // nombre, valor, azul, casilla
        const props = [
            ['名称', 'JZL-1-1', 1, 0], ['类别', '基础主梁', 1, 1], ['截面宽度(mm)', '300', 1, 1], ['截面高度(mm)', '500', 1, 1],
            ['轴线距梁左边...', '(150)', 0, 1], ['跨数量', '', 0, 1], ['箍筋', hrb + '8@100/200(2)', 1, 1], ['肢数', '2', 1, 0],
            ['下部通长筋', '2' + hrb + '25', 1, 1], ['上部通长筋', '4' + hrb + '25', 1, 1], ['侧面构造或受...', 'N4' + hrb + '16', 1, 1],
            ['拉筋', '(' + hpb + '8)', 1, 1], ['材质', '现浇混凝土', 1, 1], ['混凝土类型', '(碎石混凝土 坍落度30...', 1, 1],
            ['混凝土强度等级', '(C30)', 1, 1], ['混凝土外加剂', '(无)', 1, 0], ['泵送类型', '(混凝土泵)', 1, 0],
            ['截面周长(m)', '1.6', 1, 1], ['截面面积(m²)', '0.15', 1, 1], ['起点顶标高(m)', '-0.5', 0, 1], ['终点顶标高(m)', '-0.5', 0, 1]
        ];
        document.getElementById('props').innerHTML = props.map(([name, value, blue, check], i) => {
            const locked = i === 17 || i === 18;
            return `<tr class="h-[21px]">
                <td class="p-0 pt-[2px] text-center text-[#333] bg-[#efefef] border-r border-b border-[#c8c8d0]">${i + 1}</td>
                <td class="p-0 pt-[2px] pl-[3px] border-r border-b border-[#c8c8d0] ${blue ? 'text-[#1a5cff]' : 'text-black'}">${name}</td>
                <td class="p-0 pt-[2px] pl-[3px] border-r border-b border-[#c8c8d0] ${locked ? 'bg-[#e9e9e9] text-[#888]' : 'text-black'}"><div class="h-[18px]">${value}</div></td>
                <td class="p-0 border-b border-[#c8c8d0]">${check ? `<input type="checkbox" aria-label="${name}" class="appearance-none block mx-auto size-[14px] rounded-[2px] border border-[#777] bg-white">` : ''}</td>
            </tr>`;
        }).join('');
    </script>
</body>
</html>
